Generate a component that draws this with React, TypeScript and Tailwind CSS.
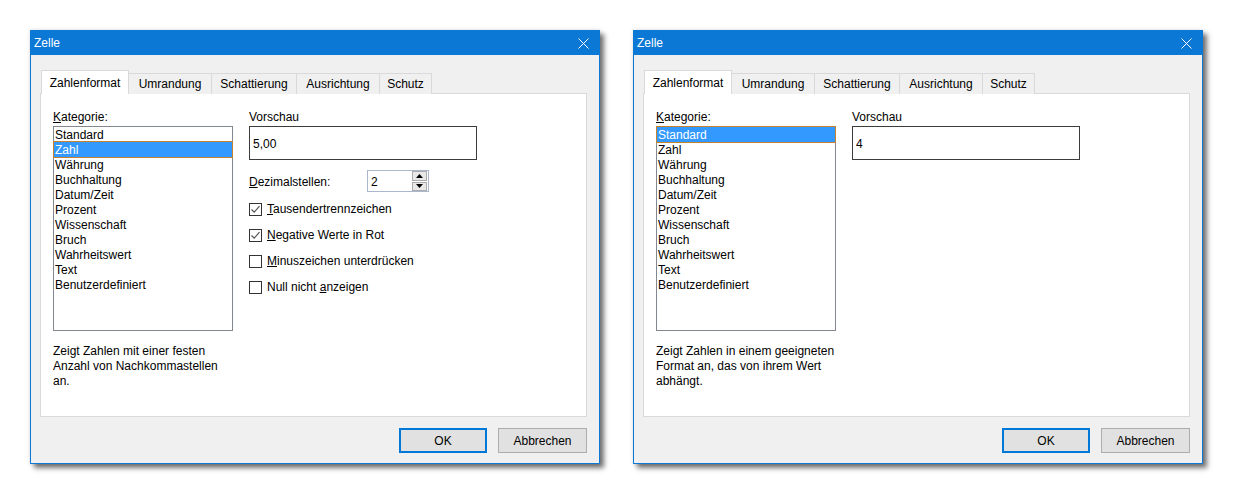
const categories = [
  'Standard',
  'Zahl',
  'Währung',
  'Buchhaltung',
  'Datum/Zeit',
  'Prozent',
  'Wissenschaft',
  'Bruch',
  'Wahrheitswert',
  'Text',
  'Benutzerdefiniert',
]

const tabs = [
  { label: 'Zahlenformat', width: 'w-[88px]' },
  { label: 'Umrandung', width: 'w-[83px]' },
  { label: 'Schattierung', width: 'w-[85px]' },
  { label: 'Ausrichtung', width: 'w-[83px]' },
  { label: 'Schutz', width: 'w-[52px]' },
]

function CheckBox({ checked }: { checked: boolean }) {
  return (
    <div className="flex h-[13px] w-[13px] items-center justify-center border border-[#333] bg-white">
      {checked && (
        <svg width="11" height="11" viewBox="0 0 11 11">
          <polyline
            points="1.5,5.5 4.2,8.2 9.5,2.2"
            fill="none"
            stroke="#555"
            strokeWidth="1.2"
          />
        </svg>
      )}
    </div>
  )
}

function Spinner({ value }: { value: string }) {
  return (
    <div className="flex h-[22px] w-[62px] items-center border border-[#abb7cc] bg-white pr-[1px]">
      <span className="flex-1 pl-[3px] pt-px">{value}</span>
      <div className="flex h-[20px] w-[15px] flex-col gap-px">
        <div className="flex flex-1 items-center justify-center border border-[#acacac] bg-[#e8e8e8]">
          <svg width="7" height="4" viewBox="0 0 7 4">
            <polygon points="0,4 7,4 3.5,0" fill="#000" />
          </svg>
        </div>
        <div className="flex flex-1 items-center justify-center border border-[#acacac] bg-[#e8e8e8]">
          <svg width="7" height="4" viewBox="0 0 7 4">
            <polygon points="0,0 7,0 3.5,4" fill="#000" />
          </svg>
        </div>
      </div>
    </div>
  )
}

function Dialog({
  selected,
  preview,
  description,
  extended,
}: {
  selected: number
  preview: string
  description: string[]
  extended: boolean
}) {
  return (
    <div className="flex h-[434px] w-[570px] flex-col border border-[#0b78d6] bg-[#f0f0f0] shadow-[4px_4px_5px_rgba(0,0,0,0.55),0_0_4px_rgba(0,0,0,0.12)]">
      {/* title bar */}
      <div className="flex h-[24px] items-center justify-between bg-[#0b78d6] pl-[3px] pr-[10px] text-white">
        <span className="pb-px">Zelle</span>
        <svg width="11" height="11" viewBox="0 0 11 11">
          <path d="M0.5 0.5 L10.5 10.5 M10.5 0.5 L0.5 10.5" stroke="#fff" strokeWidth="1" />
        </svg>
      </div>

      <div className="flex flex-1 flex-col pt-[15px]">
        {/* tabs */}
        <div className="relative z-10 -mb-px ml-[10px] flex items-end">
          {tabs.map(({ label, width }, i) =>
            i === 0 ? (
              <div
                key={label}
                className={`${width} flex h-[24px] items-center justify-center border border-b-0 border-[#d9d9d9] bg-white`}
              >
                {label}
              </div>
            ) : (
              <div
                key={label}
                className={`${width} flex h-[21px] items-center justify-center border-t border-r border-[#d9d9d9] bg-[#f0f0f0]`}
              >
                {label}
              </div>
            ),
          )}
        </div>

        {/* panel */}
        <div className="ml-[9px] flex h-[324px] w-[547px] gap-[16px] border border-[#d9d9d9] bg-white pl-[12px] pt-[16px]">
          <div className="flex w-[180px] flex-col">
            <div className="h-[15px] leading-[15px]">
              <u>K</u>ategorie:
            </div>
            <ul className="mt-[1px] h-[205px] border border-[#828790] bg-white">
              {categories.map((c, i) => (
                <li
                  key={c}
                  className={
                    i === selected
                      ? 'h-[15px] bg-[#3399ff] pl-px pt-px leading-[15px] text-white outline outline-1 outline-[#c8822e]'
                      : 'h-[15px] pl-px pt-px leading-[15px]'
                  }
                >
                  {c}
                </li>
              ))}
            </ul>
            <div className="mt-[13px] leading-[15px]">
              {description.map((line) => (
                <div key={line}>{line}</div>
              ))}
            </div>
          </div>

          <div className="flex flex-col">
            <div className="h-[15px] leading-[15px]">Vorschau</div>
            <div className="mt-[1px] flex h-[34px] w-[228px] items-center border border-[#3c3c3c] bg-white pl-[3px] pt-px">
              {preview}
            </div>

            {extended && (
              <>
                <div className="mt-[10px] flex items-center">
                  <div className="w-[118px] pt-px">
                    <u>D</u>ezimalstellen:
                  </div>
                  <Spinner value="2" />
                </div>

                <div className="mt-[4px] flex flex-col">
                  <div className="flex h-[26px] items-center gap-[5px]">
                    <CheckBox checked />
                    <span>
                      <u>T</u>ausendertrennzeichen
                    </span>
                  </div>
                  <div className="flex h-[26px] items-center gap-[5px]">
                    <CheckBox checked />
                    <span>
                      <u>N</u>egative Werte in Rot
                    </span>
                  </div>
                  <div className="flex h-[26px] items-center gap-[5px]">
                    <CheckBox checked={false} />
                    <span>
                      <u>M</u>inuszeichen unterdrücken
                    </span>
                  </div>
                  <div className="flex h-[27px] items-end gap-[5px] pb-[7px]">
                    <CheckBox checked={false} />
                    <span className="leading-[13px]">
                      Null nicht <u>a</u>nzeigen
                    </span>
                  </div>
                </div>
              </>
            )}
          </div>
        </div>

        {/* buttons */}
        <div className="mt-[11px] flex justify-end gap-[11px] pr-[12px]">
          <button className="h-[25px] w-[88px] border-2 border-[#0078d7] bg-[#e1e1e1]">
            OK
          </button>
          <button className="h-[25px] w-[89px] border border-[#adadad] bg-[#e1e1e1]">
            Abbrechen
          </button>
        </div>
      </div>
    </div>
  )
}

export default function App() {
  return (
    <div className="flex h-[495px] w-[1233px] gap-[33px] bg-white pl-[30px] pt-[30px] font-['Liberation_Sans',Arial,sans-serif] text-[12px] text-black">
      <Dialog
        selected={1}
        preview="5,00"
        description={['Zeigt Zahlen mit einer festen', 'Anzahl von Nachkommastellen', 'an.']}
        extended
      />
      <Dialog
        selected={0}
        preview="4"
        description={['Zeigt Zahlen in einem geeigneten', 'Format an, das von ihrem Wert', 'abhängt.']}
        extended={false}
      />
    </div>
  )
}
